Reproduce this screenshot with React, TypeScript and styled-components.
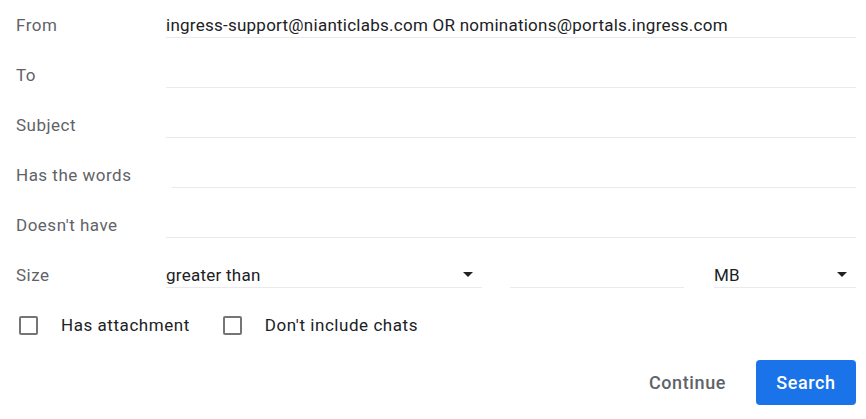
import React from 'react'
import styled, { createGlobalStyle } from 'styled-components'

const GlobalStyle = createGlobalStyle`
  body {
    margin: 0;
    background: #fff;
    font-family: Roboto, "Liberation Sans", sans-serif;
  }
`

const Form = styled.form`
  width: 866px;
  height: 419px;
  box-sizing: border-box;
  padding: 0 10px 0 16px;
  display: flex;
  flex-direction: column;
`

const Row = styled.div`
  display: flex;
  align-items: flex-end;
  height: 50px;
`

const Label = styled.div`
  width: 150px;
  font-size: 17px;
  letter-spacing: 0.5px;
  color: #5f6368;
  height: 50px;
  line-height: 50px;
`

const Field = styled.div<{ $offset?: number; $width?: string }>`
  flex: ${(p) => (p.$width ? 'none' : '1')};
  width: ${(p) => p.$width || 'auto'};
  margin-left: ${(p) => p.$offset || 0}px;
  height: 38px;
  box-sizing: border-box;
  border-bottom: 1px solid #e8eaed;
  margin-bottom: 12px;
  display: flex;
  align-items: center;
  justify-content: space-between;
  font-size: 17px;
  letter-spacing: 0.25px;
  color: #202124;
  padding-top: 12px;
`

const Arrow = styled.span`
  width: 0;
  height: 0;
  border-left: 5px solid transparent;
  border-right: 5px solid transparent;
  border-top: 5px solid #202124;
  margin-right: 9px;
`

const CheckRow = styled.div`
  display: flex;
  align-items: center;
  height: 50px;
`

const Check = styled.label`
  display: flex;
  align-items: center;
  font-size: 17px;
  letter-spacing: 0.55px;
  color: #202124;
  margin-right: 30px;
`

const Box = styled.span`
  width: 19px;
  height: 19px;
  box-sizing: border-box;
  border: 2px solid #757575;
  border-radius: 2px;
  margin: 0 23px 0 3px;
`

const Actions = styled.div`
  display: flex;
  justify-content: flex-end;
  align-items: center;
  margin-top: 10px;
  gap: 8px;
`

const Button = styled.button<{ $primary?: boolean }>`
  font-family: Roboto, "Liberation Sans", sans-serif;
  font-size: 18px;
  font-weight: 500;
  letter-spacing: 0.6px;
  border: none;
  border-radius: 4px;
  height: 45px;
  width: ${(p) => (p.$primary ? '100px' : 'auto')};
  padding: 0 ${(p) => (p.$primary ? 0 : 22)}px;
  background: ${(p) => (p.$primary ? '#1a73e8' : 'transparent')};
  color: ${(p) => (p.$primary ? '#fff' : '#5f6368')};
`

const fields: [string, string, number?][] = [
  ['From', 'ingress-support@nianticlabs.com OR nominations@portals.ingress.com'],
  ['To', ''],
  ['Subject', ''],
  ['Has the words', '', 6],
  ["Doesn't have", ''],
]

export default function App() {
  return (
    <>
      <GlobalStyle />
      <Form>
        {fields.map(([label, value, offset]) => (
          <Row key={label}>
            <Label>{label}</Label>
            <Field $offset={offset}>{value}</Field>
          </Row>
        ))}
        <Row>
          <Label>Size</Label>
          <Field $width="316px">
            greater than
            <Arrow />
          </Field>
          <Field $width="174px" $offset={28} />
          <Field $width="142px" $offset={30}>
            MB
            <Arrow />
          </Field>
        </Row>
        <CheckRow>
          <Check>
            <Box />
            Has attachment
          </Check>
          <Check>
            <Box />
            Don't include chats
          </Check>
        </CheckRow>
        <Actions>
          <Button type="button">Continue</Button>
          <Button type="button" $primary>
            Search
          </Button>
        </Actions>
      </Form>
    </>
  )
}
